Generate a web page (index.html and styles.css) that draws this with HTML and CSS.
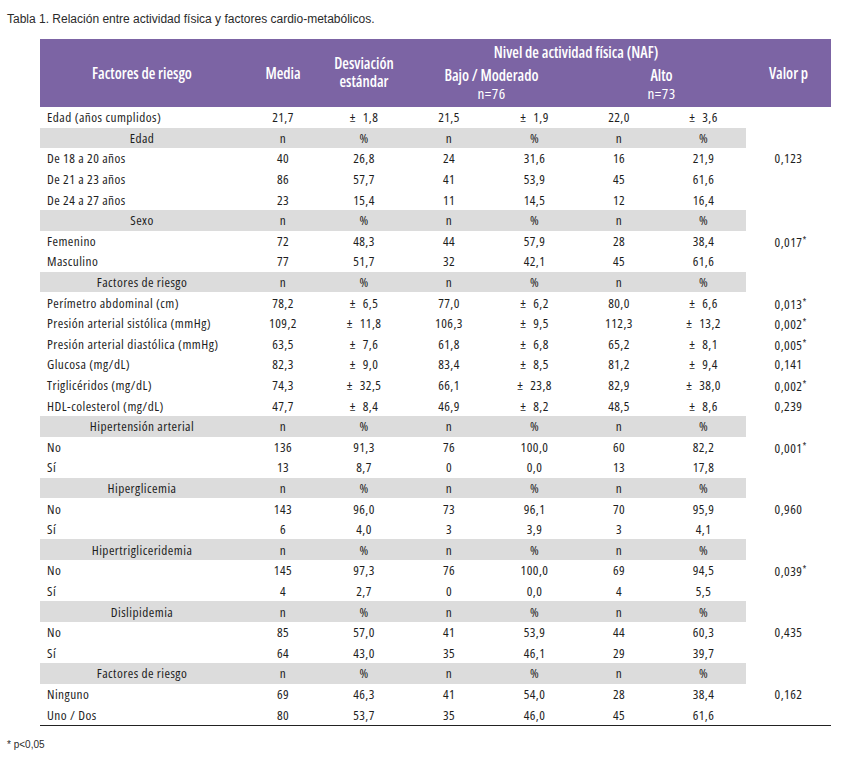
FILE: index.html
```html
<!DOCTYPE html>
<html lang="es">
<head>
<meta charset="utf-8">
<link rel="stylesheet" href="styles.css">
</head>
<body>
<div class="title">Tabla 1. Relación entre actividad física y factores cardio-metabólicos.</div>
<table class="tbl">
  <colgroup>
    <col class="c1"><col class="c2"><col class="c3"><col class="c4"><col class="c5"><col class="c6"><col class="c7"><col class="c8">
  </colgroup>
  <thead>
    <tr class="h1">
      <th rowspan="3">Factores de riesgo</th>
      <th rowspan="3">Media</th>
      <th rowspan="3" class="desv"><span class="dl">Desviación</span><span class="dl">estándar</span></th>
      <th colspan="4">Nivel de actividad física (NAF)</th>
      <th rowspan="3">Valor p</th>
    </tr>
    <tr class="h2">
      <th colspan="2">Bajo / Moderado</th>
      <th colspan="2">Alto</th>
    </tr>
    <tr class="h3">
      <th colspan="2">n=76</th>
      <th colspan="2">n=73</th>
    </tr>
  </thead>
  <tbody>
    <tr><td class="lbl">Edad (años cumplidos)</td><td>21,7</td><td>± 1,8</td><td>21,5</td><td>± 1,9</td><td>22,0</td><td>± 3,6</td><td></td></tr>
    <tr class="sub"><td>Edad</td><td>n</td><td>%</td><td>n</td><td>%</td><td>n</td><td>%</td><td class="blank"></td></tr>
    <tr><td class="lbl">De 18 a 20 años</td><td>40</td><td>26,8</td><td>24</td><td>31,6</td><td>16</td><td>21,9</td><td>0,123</td></tr>
    <tr><td class="lbl">De 21 a 23 años</td><td>86</td><td>57,7</td><td>41</td><td>53,9</td><td>45</td><td>61,6</td><td></td></tr>
    <tr><td class="lbl">De 24 a 27 años</td><td>23</td><td>15,4</td><td>11</td><td>14,5</td><td>12</td><td>16,4</td><td></td></tr>
    <tr class="sub"><td>Sexo</td><td>n</td><td>%</td><td>n</td><td>%</td><td>n</td><td>%</td><td class="blank"></td></tr>
    <tr><td class="lbl">Femenino</td><td>72</td><td>48,3</td><td>44</td><td>57,9</td><td>28</td><td>38,4</td><td>0,017<span class="ast">*</span></td></tr>
    <tr><td class="lbl">Masculino</td><td>77</td><td>51,7</td><td>32</td><td>42,1</td><td>45</td><td>61,6</td><td></td></tr>
    <tr class="sub"><td>Factores de riesgo</td><td>n</td><td>%</td><td>n</td><td>%</td><td>n</td><td>%</td><td class="blank"></td></tr>
    <tr><td class="lbl">Perímetro abdominal (cm)</td><td>78,2</td><td>± 6,5</td><td>77,0</td><td>± 6,2</td><td>80,0</td><td>± 6,6</td><td>0,013<span class="ast">*</span></td></tr>
    <tr><td class="lbl">Presión arterial sistólica (mmHg)</td><td>109,2</td><td>± 11,8</td><td>106,3</td><td>± 9,5</td><td>112,3</td><td>± 13,2</td><td>0,002<span class="ast">*</span></td></tr>
    <tr><td class="lbl">Presión arterial diastólica (mmHg)</td><td>63,5</td><td>± 7,6</td><td>61,8</td><td>± 6,8</td><td>65,2</td><td>± 8,1</td><td>0,005<span class="ast">*</span></td></tr>
    <tr><td class="lbl">Glucosa (mg/dL)</td><td>82,3</td><td>± 9,0</td><td>83,4</td><td>± 8,5</td><td>81,2</td><td>± 9,4</td><td>0,141</td></tr>
    <tr><td class="lbl">Triglicéridos (mg/dL)</td><td>74,3</td><td>± 32,5</td><td>66,1</td><td>± 23,8</td><td>82,9</td><td>± 38,0</td><td>0,002<span class="ast">*</span></td></tr>
    <tr><td class="lbl">HDL-colesterol (mg/dL)</td><td>47,7</td><td>± 8,4</td><td>46,9</td><td>± 8,2</td><td>48,5</td><td>± 8,6</td><td>0,239</td></tr>
    <tr class="sub"><td>Hipertensión arterial</td><td>n</td><td>%</td><td>n</td><td>%</td><td>n</td><td>%</td><td class="blank"></td></tr>
    <tr><td class="lbl">No</td><td>136</td><td>91,3</td><td>76</td><td>100,0</td><td>60</td><td>82,2</td><td>0,001<span class="ast">*</span></td></tr>
    <tr><td class="lbl">Sí</td><td>13</td><td>8,7</td><td>0</td><td>0,0</td><td>13</td><td>17,8</td><td></td></tr>
    <tr class="sub"><td>Hiperglicemia</td><td>n</td><td>%</td><td>n</td><td>%</td><td>n</td><td>%</td><td class="blank"></td></tr>
    <tr><td class="lbl">No</td><td>143</td><td>96,0</td><td>73</td><td>96,1</td><td>70</td><td>95,9</td><td>0,960</td></tr>
    <tr><td class="lbl">Sí</td><td>6</td><td>4,0</td><td>3</td><td>3,9</td><td>3</td><td>4,1</td><td></td></tr>
    <tr class="sub"><td>Hipertrigliceridemia</td><td>n</td><td>%</td><td>n</td><td>%</td><td>n</td><td>%</td><td class="blank"></td></tr>
    <tr><td class="lbl">No</td><td>145</td><td>97,3</td><td>76</td><td>100,0</td><td>69</td><td>94,5</td><td>0,039<span class="ast">*</span></td></tr>
    <tr><td class="lbl">Sí</td><td>4</td><td>2,7</td><td>0</td><td>0,0</td><td>4</td><td>5,5</td><td></td></tr>
    <tr class="sub"><td>Dislipidemia</td><td>n</td><td>%</td><td>n</td><td>%</td><td>n</td><td>%</td><td class="blank"></td></tr>
    <tr><td class="lbl">No</td><td>85</td><td>57,0</td><td>41</td><td>53,9</td><td>44</td><td>60,3</td><td>0,435</td></tr>
    <tr><td class="lbl">Sí</td><td>64</td><td>43,0</td><td>35</td><td>46,1</td><td>29</td><td>39,7</td><td></td></tr>
    <tr class="sub"><td>Factores de riesgo</td><td>n</td><td>%</td><td>n</td><td>%</td><td>n</td><td>%</td><td class="blank"></td></tr>
    <tr><td class="lbl">Ninguno</td><td>69</td><td>46,3</td><td>41</td><td>54,0</td><td>28</td><td>38,4</td><td>0,162</td></tr>
    <tr class="last"><td class="lbl">Uno / Dos</td><td>80</td><td>53,7</td><td>35</td><td>46,0</td><td>45</td><td>61,6</td><td></td></tr>
  </tbody>
</table>
<div class="note">* p&lt;0,05</div>
</body>
</html>
```

FILE: styles.css
```css
html, body {
  margin: 0;
  padding: 0;
  background: #fff;
}

body {
  padding: 12px 0 0 7px;
  color: #1e1e1e;
}

.title {
  font-family: "Liberation Sans", Arial, sans-serif;
  font-size: 12px;
  line-height: 14px;
  color: #2a2a2a;
}

.tbl {
  margin: 13px 0 0 33px;
  width: 791px;
  table-layout: fixed;
  border-collapse: collapse;
  border-spacing: 0;
  font-family: "Open Sans", "Noto Sans", sans-serif;
  font-stretch: 75%;
  font-size: 13.3px;
  letter-spacing: 0.45px;
  color: #1e1e1e;
}

.c1 { width: 204px; }
.c2 { width: 78px; }
.c3 { width: 84px; }
.c4 { width: 86px; }
.c5 { width: 85px; }
.c6 { width: 84px; }
.c7 { width: 85px; }
.c8 { width: 85px; }

.tbl th {
  background: #7c64a4;
  color: #fff;
  font-weight: 600;
  font-size: 15.2px;
  font-stretch: 75%;
  letter-spacing: 0;
  padding: 0;
  text-align: center;
  vertical-align: middle;
  line-height: 16px;
}

.tbl .desv {
  padding-bottom: 1px;
}

.tbl .dl {
  display: block;
  line-height: 17.5px;
}

.tbl .h1 th { height: 25px; }
.tbl .h2 th { height: 21px; }
.tbl .h3 th {
  height: 16px;
  padding-bottom: 6px;
  font-weight: 500;
  letter-spacing: 0.5px;
}

.tbl td {
  height: 20.6px;
  padding: 0;
  text-align: center;
  vertical-align: middle;
  line-height: 16px;
  white-space: nowrap;
}

.tbl tbody tr:not(.sub) td:not(.lbl) {
  word-spacing: 4px;
}

.tbl td.lbl {
  text-align: left;
  padding-left: 7px;
}

.tbl .sub td {
  background: #dcdcdc;
}

.tbl .sub td.blank {
  background: #fff;
}

.tbl .last td {
  border-bottom: 1px solid #222;
}

.ast {
  display: inline-block;
  width: 0;
  font-size: 10px;
  vertical-align: 3px;
}

.note {
  margin-top: 13px;
  font-family: "Liberation Sans", Arial, sans-serif;
  font-size: 10px;
  line-height: 12px;
  color: #2a2a2a;
}
```
